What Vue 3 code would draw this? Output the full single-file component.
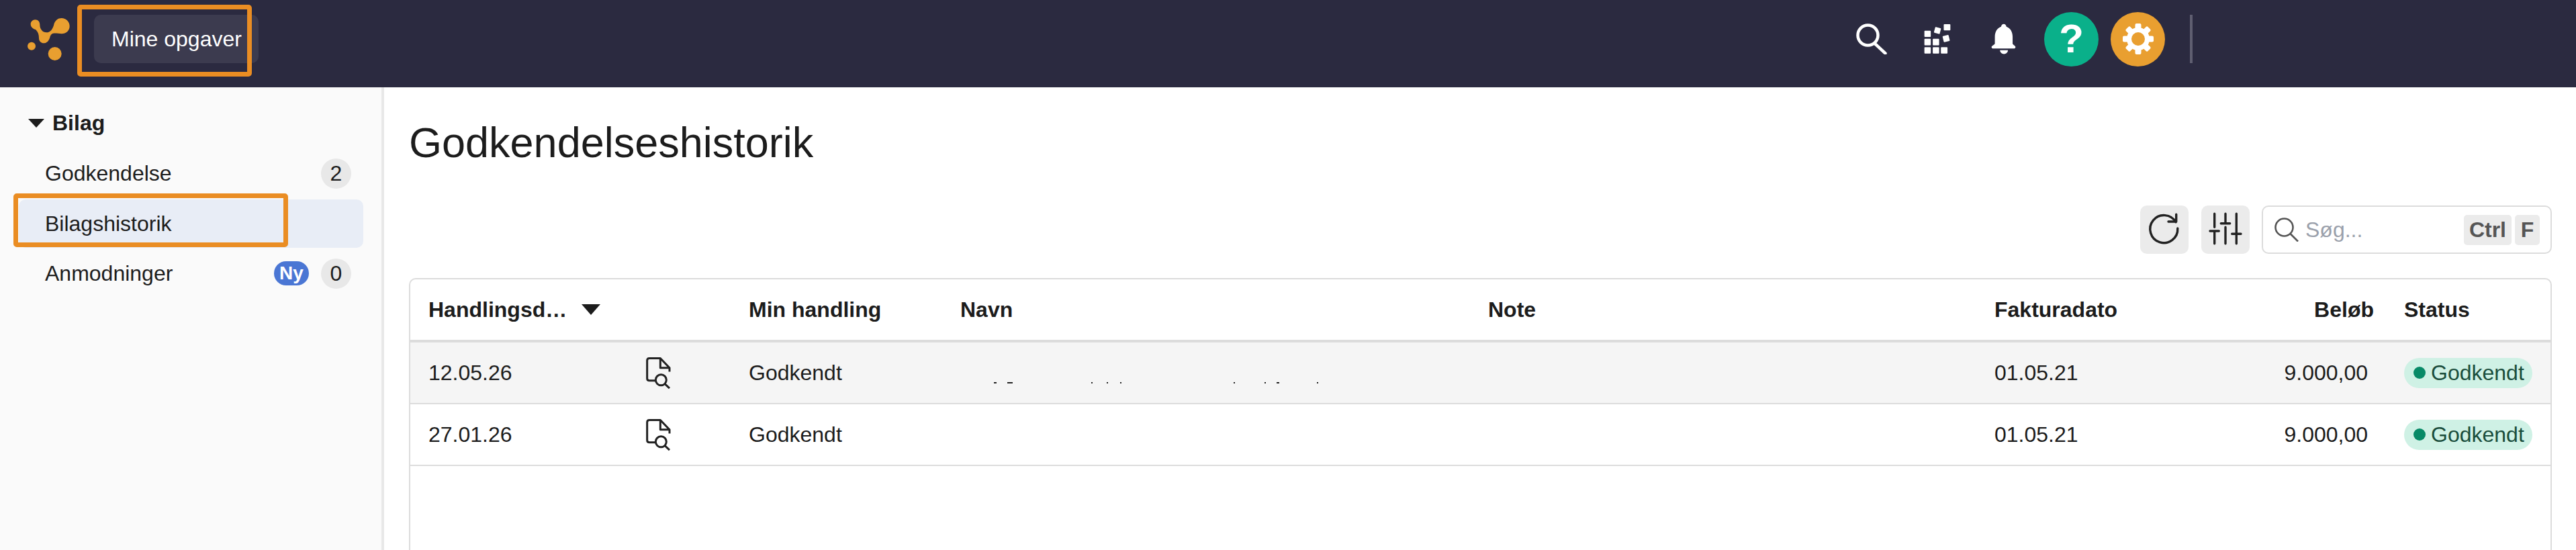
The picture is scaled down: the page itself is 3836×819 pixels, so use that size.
<script setup>
const menu = [
  { label: 'Godkendelse', count: 2 },
  { label: 'Bilagshistorik', active: true },
  { label: 'Anmodninger', count: 0, isNew: true }
]

const rows = [
  { date: '12.05.26', action: 'Godkendt', invoiceDate: '01.05.21', amount: '9.000,00', status: 'Godkendt', highlight: true },
  { date: '27.01.26', action: 'Godkendt', invoiceDate: '01.05.21', amount: '9.000,00', status: 'Godkendt' }
]

// what is left of the hidden name in the first row
const nameMarks = [
  { left: 77, width: 4 }, { left: 97, width: 8 }, { left: 222, width: 2 }, { left: 245, width: 2 },
  { left: 265, width: 2 }, { left: 434, width: 2 }, { left: 480, width: 2 }, { left: 498, width: 4 }, { left: 558, width: 2 }
]

const gearTeeth = [0, 45, 90, 135, 180, 225, 270, 315]
</script>

<template>
  <div class="app">
    <header class="topbar">
      <svg class="logo" viewBox="0 0 270 270" aria-hidden="true">
        <path d="M67 43C80 43 88 52 88 66C88 85 100 100 118 100C135 100 145 85 150 68C155 45 170 36 185 36C205 36 221 52 221 72C221 92 205 106 185 106C170 106 150 100 140 108C133 115 134 122 130 130C125 142 115 148 107 148C92 148 84 137 84 125C84 110 80 98 70 88C60 84 47 78 47 63C47 52 56 43 67 43Z" />
        <circle cx="51" cy="161" r="18" />
        <circle cx="155" cy="195" r="30" />
      </svg>
      <button type="button" class="tab">Mine opgaver</button>

      <div class="tools">
        <button type="button" class="tool">
          <svg class="tool-search" viewBox="0 0 46 46" aria-hidden="true">
            <circle cx="17.5" cy="17.5" r="15" />
            <path d="M28 30L43.5 44.5" />
          </svg>
        </button>
        <button type="button" class="tool">
          <svg class="tool-grid" viewBox="45 30 122 138" aria-hidden="true">
            <rect x="47" y="136" width="29" height="29" rx="3" />
            <rect x="85" y="136" width="29" height="29" rx="3" />
            <rect x="122" y="136" width="30" height="29" rx="3" />
            <rect x="47" y="98" width="29" height="30" rx="3" />
            <rect x="85" y="98" width="29" height="30" rx="3" />
            <rect x="47" y="62" width="29" height="28" rx="3" />
            <rect x="93" y="47" width="27" height="27" rx="3" transform="rotate(15 106 60)" />
            <rect x="132" y="83" width="28" height="28" rx="3" transform="rotate(-14 146 97)" />
            <rect x="135" y="32" width="30" height="28" rx="3" />
          </svg>
        </button>
        <button type="button" class="tool">
          <svg class="tool-bell" viewBox="348 28 112 138" aria-hidden="true">
            <path d="M405 30C412 30 416 36 417 42C435 48 445 66 445 88L445 118C445 122 458 128 458 133C458 138 455 140 450 140L358 140C353 140 350 138 350 133C350 128 365 122 365 118L365 88C365 66 375 48 393 42C394 36 398 30 405 30Z" />
            <path d="M388 148L424 148C424 158 415 165 406 165C397 165 388 158 388 148Z" />
          </svg>
        </button>
        <span class="round round-help">?</span>
        <span class="round round-settings">
          <svg class="gear" viewBox="-24 -24 48 48" aria-hidden="true">
            <rect
              v-for="angle in gearTeeth"
              :key="angle"
              x="-4.5"
              y="-23"
              width="9"
              height="10"
              rx="2"
              :transform="`rotate(${angle})`"
            />
            <circle class="gear-ring" r="13.5" />
          </svg>
        </span>
        <span class="divider"></span>
      </div>
    </header>

    <div class="body">
      <aside class="sidebar">
        <div class="group-title">
          <span class="caret"></span>
          Bilag
        </div>
        <a
          v-for="item in menu"
          :key="item.label"
          class="menu-item"
          :class="{ active: item.active }"
        >
          <span class="menu-label">{{ item.label }}</span>
          <span v-if="item.isNew" class="new-badge">Ny</span>
          <span v-if="item.count !== undefined" class="count">{{ item.count }}</span>
        </a>
      </aside>

      <main class="content">
        <h1>Godkendelseshistorik</h1>

        <div class="toolbar">
          <button type="button" class="icon-btn">
            <svg viewBox="0 0 72 72" aria-hidden="true">
              <path d="M55.8 34A20.5 20.5 0 1 1 53.05 24.75" />
              <path d="M53.7 13.3V24H42" />
            </svg>
          </button>
          <button type="button" class="icon-btn">
            <svg viewBox="0 0 72 72" aria-hidden="true">
              <path d="M19.7 12.3V32.3M13 38H26.3M19.7 38V56.7" />
              <path d="M36 12.3V26.7M29.3 26.7H42.7M36 32.3V56.7" />
              <path d="M52.3 12.3V42.3M45.7 42.3H59M52.3 42.3V56.7" />
            </svg>
          </button>
          <label class="search">
            <svg viewBox="0 0 36 36" aria-hidden="true">
              <circle cx="14.5" cy="14.5" r="13" />
              <path d="M23.5 24L35 35.5" />
            </svg>
            <input type="text" placeholder="Søg..." />
            <kbd>Ctrl</kbd>
            <kbd>F</kbd>
          </label>
        </div>

        <section class="table">
          <div class="row head">
            <div class="cell cell-date">
              <span class="sort-label">Handlingsd…</span>
              <span class="sort-caret"></span>
            </div>
            <div class="cell"></div>
            <div class="cell">Min handling</div>
            <div class="cell">Navn</div>
            <div class="cell">Note</div>
            <div class="cell">Fakturadato</div>
            <div class="cell cell-amount">Beløb</div>
            <div class="cell">Status</div>
          </div>

          <div
            v-for="(row, index) in rows"
            :key="row.date"
            class="row"
            :class="{ highlight: row.highlight }"
          >
            <div class="cell">{{ row.date }}</div>
            <div class="cell cell-doc">
              <svg class="doc" viewBox="30 18 114 146" aria-hidden="true">
                <path d="M75 125H48Q38 125 38 115V35Q38 25 48 25H97L138 68V85" />
                <path d="M97 25V68H138" />
                <circle cx="100" cy="122" r="24" />
                <path d="M118 140L138 159" />
              </svg>
            </div>
            <div class="cell">{{ row.action }}</div>
            <div class="cell cell-name">
              <template v-if="index === 0">
                <i
                  v-for="mark in nameMarks"
                  :key="mark.left"
                  class="name-mark"
                  :style="{ left: mark.left + 'px', width: mark.width + 'px' }"
                ></i>
              </template>
            </div>
            <div class="cell"></div>
            <div class="cell">{{ row.invoiceDate }}</div>
            <div class="cell cell-amount">{{ row.amount }}</div>
            <div class="cell">
              <span class="status"><i></i>{{ row.status }}</span>
            </div>
          </div>
        </section>
      </main>
    </div>

    <div class="callout callout-tab"></div>
    <div class="callout callout-menu"></div>
  </div>
</template>

<style>
html,
body {
  margin: 0;
  overflow: hidden;
  background: #fff;
}
</style>

<style scoped>
.app {
  position: relative;
  width: 3836px;
  height: 819px;
  overflow: hidden;
  display: flex;
  flex-direction: column;
  font-family: "Liberation Sans", Arial, sans-serif;
  font-size: 32px;
  color: #1c1c1c;
}

.topbar {
  flex: 0 0 130px;
  display: flex;
  align-items: center;
  padding-left: 30px;
  background: #2b2a40;
}
.logo {
  width: 90px;
  height: 90px;
  margin-top: -10px;
  fill: #e99f30;
}
.tab {
  width: 245px;
  height: 72px;
  margin: -14px 0 0 20px;
  padding: 0 0 0 26px;
  border: 0;
  border-radius: 10px;
  background: #3c3b4f;
  color: #fff;
  font: inherit;
  text-align: left;
}
.tools {
  display: flex;
  align-items: center;
  margin-left: auto;
  margin-right: 571px;
  height: 100%;
  transform: translateY(-7px);
}
.tool {
  display: flex;
  align-items: center;
  justify-content: center;
  width: 98px;
  height: 72px;
  padding: 0;
  border: 0;
  background: none;
}
.tool-search {
  width: 46px;
  height: 46px;
  fill: none;
  stroke: #fff;
  stroke-width: 4.5;
  stroke-linecap: round;
}
.tool-grid {
  width: 40px;
  height: 46px;
  fill: #fff;
}
.tool-bell {
  width: 37px;
  height: 46px;
  fill: #fff;
}
.round {
  display: flex;
  align-items: center;
  justify-content: center;
  width: 81px;
  height: 81px;
  border-radius: 50%;
  color: #fff;
}
.round-help {
  margin-left: 12px;
  background: #0ab08a;
  font-size: 60px;
  font-weight: 700;
  line-height: 1;
}
.round-settings {
  margin-left: 18px;
  background: #e99f30;
}
.gear {
  width: 48px;
  height: 48px;
  fill: #fff;
}
.gear-ring {
  fill: none;
  stroke: #fff;
  stroke-width: 7;
}
.divider {
  width: 4px;
  height: 72px;
  margin-left: 37px;
  background: #5f5e70;
}

.body {
  flex: 1;
  display: flex;
  min-height: 0;
}
.sidebar {
  flex: 0 0 572px;
  box-sizing: border-box;
  padding: 17px 27px 0 28px;
  background: #fafafa;
  border-right: 4px solid #e8e8e8;
}
.group-title {
  display: flex;
  align-items: center;
  gap: 12px;
  height: 72px;
  margin-bottom: 3px;
  padding-left: 14px;
  font-weight: 700;
}
.caret {
  width: 0;
  height: 0;
  border-left: 12px solid transparent;
  border-right: 12px solid transparent;
  border-top: 13px solid #1c1c1c;
}
.menu-item {
  display: flex;
  align-items: center;
  gap: 18px;
  height: 72px;
  margin-bottom: 2px;
  padding: 0 18px 0 39px;
  border-radius: 10px;
}
.menu-item:first-of-type {
  margin-bottom: 3px;
}
.menu-item.active {
  background: #e8edf6;
}
.menu-label {
  margin-right: auto;
}
.count {
  display: flex;
  align-items: center;
  justify-content: center;
  width: 45px;
  height: 45px;
  border-radius: 50%;
  background: #e8e8e8;
}
.new-badge {
  display: flex;
  align-items: center;
  justify-content: center;
  width: 52px;
  height: 36px;
  border-radius: 18px;
  background: #4a76d4;
  color: #fff;
  font-size: 28px;
  font-weight: 700;
}

.content {
  flex: 1;
  min-width: 0;
  padding: 45px 36px 0 37px;
  overflow: hidden;
}
h1 {
  margin: 0 0 57px;
  font-size: 63px;
  font-weight: 400;
  line-height: 74px;
}
.toolbar {
  display: flex;
  justify-content: flex-end;
  gap: 19px;
  height: 72px;
  margin-bottom: 36px;
}
.icon-btn {
  width: 72px;
  height: 72px;
  padding: 0;
  border: 0;
  border-radius: 10px;
  background: #ebebeb;
}
.icon-btn svg {
  display: block;
  width: 72px;
  height: 72px;
  fill: none;
  stroke: #222;
  stroke-width: 3.4;
  stroke-linecap: round;
  stroke-linejoin: round;
}
.search {
  display: flex;
  align-items: center;
  gap: 5px;
  box-sizing: border-box;
  width: 432px;
  margin-left: -1px;
  padding: 0 16px 0 17px;
  border: 2px solid #dcdcdc;
  border-radius: 10px;
}
.search svg {
  flex: none;
  width: 36px;
  height: 36px;
  fill: none;
  stroke: #555;
  stroke-width: 2.6;
}
.search input {
  flex: 1;
  min-width: 0;
  height: 60px;
  padding: 0 0 0 5px;
  border: 0;
  outline: 0;
  background: none;
  color: #1c1c1c;
  font: inherit;
}
.search input::placeholder {
  color: #9aa0ab;
  opacity: 1;
}
kbd {
  display: flex;
  align-items: center;
  justify-content: center;
  min-width: 37px;
  height: 45px;
  padding: 0 8px;
  box-sizing: border-box;
  border-radius: 5px;
  background: #ebebeb;
  color: #555;
  font-family: inherit;
  font-size: 32px;
  font-weight: 700;
}

.table {
  box-sizing: border-box;
  min-height: 500px;
  border: 2px solid #dcdcdc;
  border-radius: 10px;
}
.row {
  display: grid;
  grid-template-columns: 350px 127px 315px 786px 754px 400px 210px 1fr;
  align-items: center;
  height: 90px;
  border-bottom: 2px solid #dcdcdc;
}
.row.head {
  border-bottom-width: 4px;
  font-weight: 700;
}
.row.highlight {
  background: #f5f5f5;
}
.cell {
  position: relative;
  padding-left: 27px;
  white-space: nowrap;
}
.cell-date {
  display: flex;
  align-items: center;
}
.sort-label {
  width: 208px;
}
.sort-caret {
  width: 0;
  height: 0;
  margin-left: 20px;
  border-left: 14px solid transparent;
  border-right: 14px solid transparent;
  border-top: 16px solid #1c1c1c;
}
.cell-amount {
  padding: 0 27px 0 0;
  text-align: right;
}
.head .cell-amount {
  padding-right: 18px;
}
.cell-doc {
  padding-left: 0;
}
.doc {
  display: block;
  width: 38px;
  height: 49px;
  fill: none;
  stroke: #222;
  stroke-width: 9;
  stroke-linejoin: round;
}
.name-mark {
  position: absolute;
  top: 14px;
  height: 2px;
  background: #222;
}
.status {
  display: inline-flex;
  align-items: center;
  gap: 8px;
  height: 45px;
  padding: 0 12px 0 14px;
  border-radius: 23px;
  background: #cff1e5;
  color: #1a4d3c;
}
.status i {
  width: 18px;
  height: 18px;
  border-radius: 50%;
  background: #078a67;
}

.callout {
  position: absolute;
  box-sizing: border-box;
  border: 7px solid #ea8d23;
  border-radius: 5px;
}
.callout-tab {
  left: 115px;
  top: 7px;
  width: 260px;
  height: 107px;
}
.callout-menu {
  left: 20px;
  top: 288px;
  width: 409px;
  height: 80px;
}
</style>
